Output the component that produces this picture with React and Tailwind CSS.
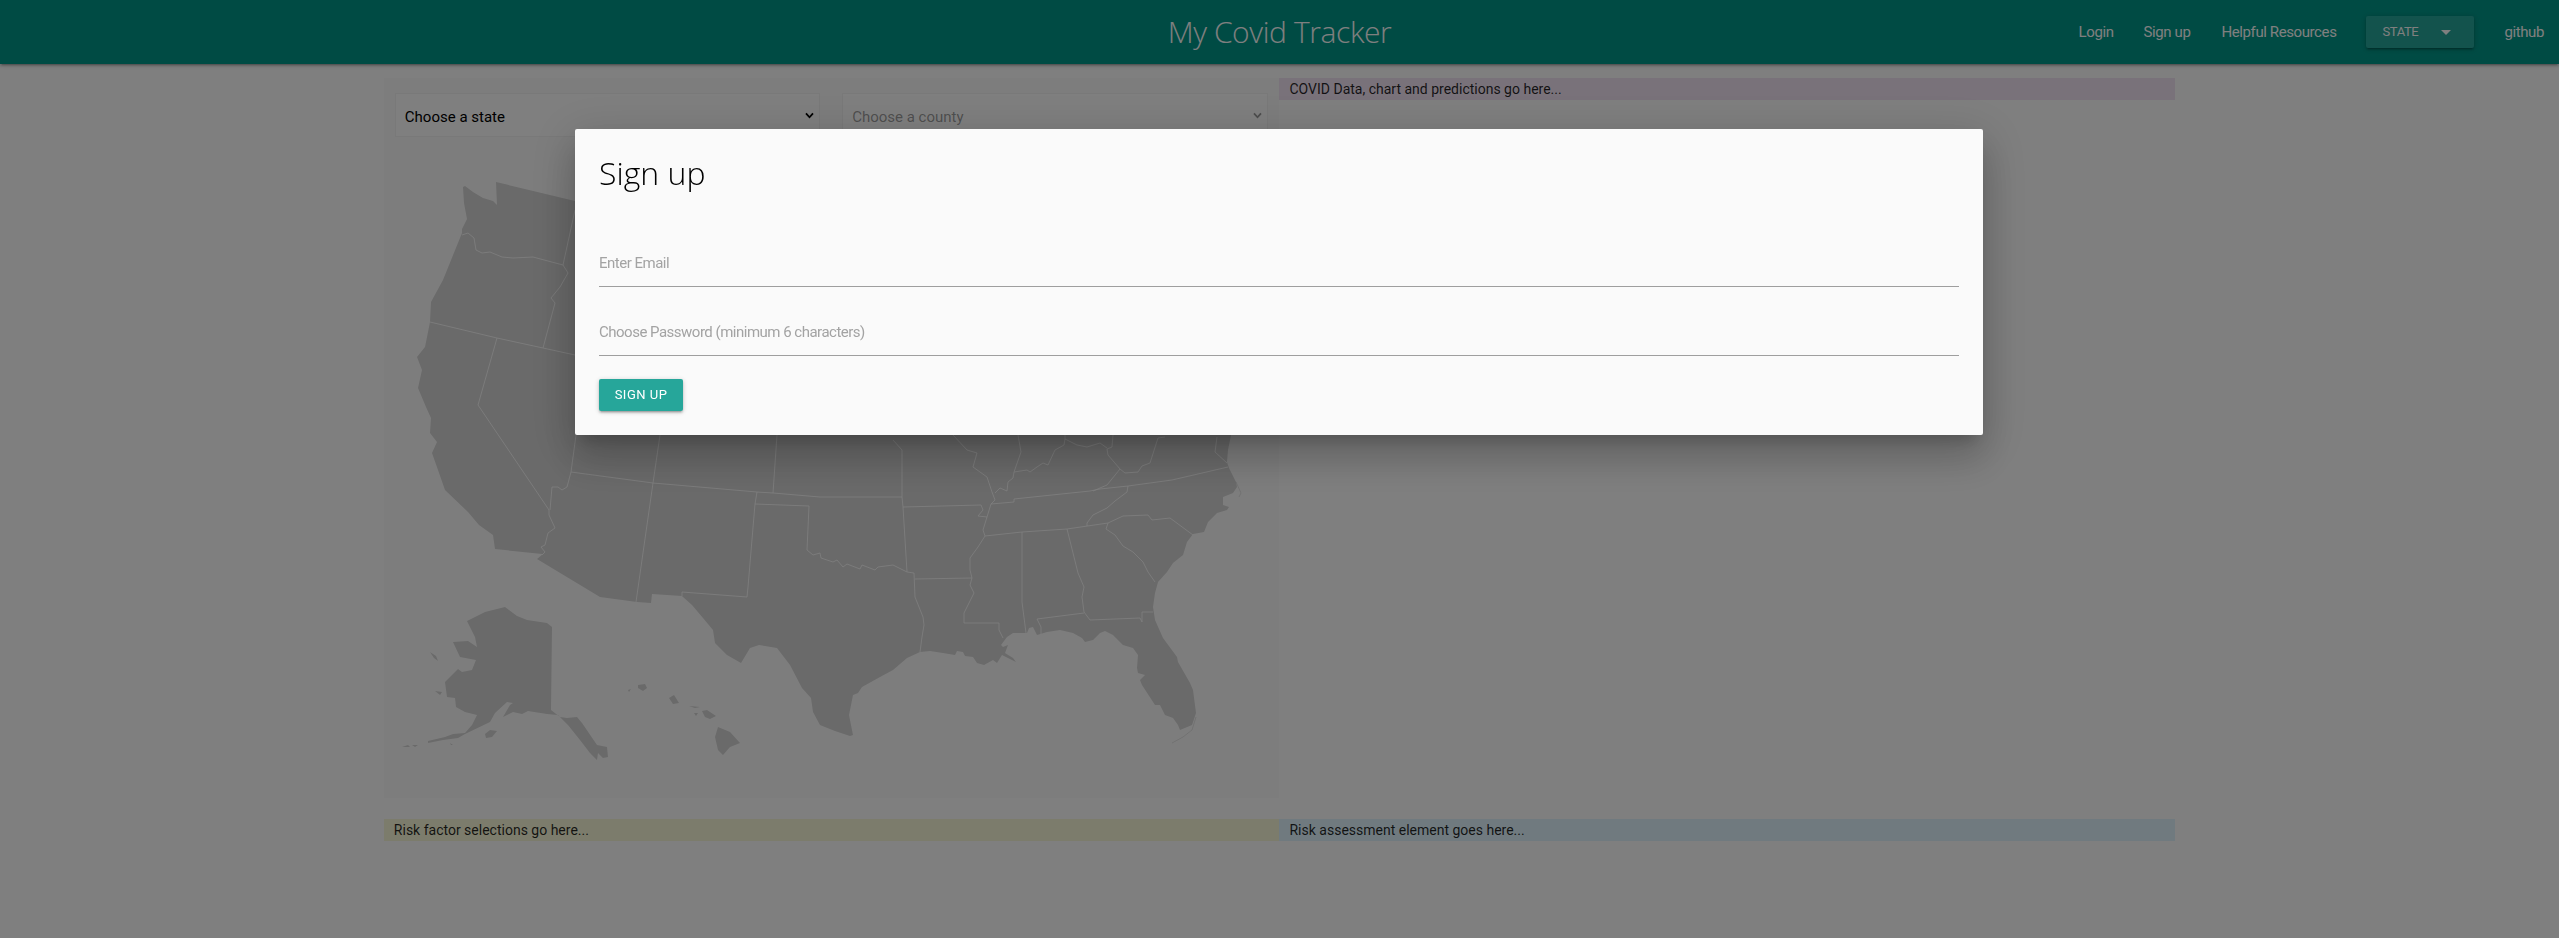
import React from "react";

// map paths use page coordinates, the svg viewBox starts at the panel's inner corner
const MAINLAND =
  "M463 187 465 186 473 192 483 198 493 201 497 205 496 182 575 201 800 201 1240 201 1231 435 1228 450 1227 462 1229 468 1236 482 1237 487 1233 493 1223 497 1223 505 1229 507 1227 510 1217 513 1208 522 1204 532 1193 534 1187 542 1183 555 1173 563 1167 572 1158 582 1155 593 1153 607 1155 620 1163 638 1177 657 1178 662 1190 683 1193 690 1196 713 1192 725 1180 730 1178 725 1173 718 1165 715 1160 705 1155 705 1142 685 1140 680 1145 675 1138 673 1137 668 1138 655 1133 648 1123 645 1113 635 1105 631 1100 633 1093 640 1085 642 1082 638 1073 633 1060 630 1047 632 1037 635 1033 627 1029 628 1027 633 1013 633 1007 637 1001 645 1003 647 1008 645 1005 653 1013 658 1016 662 1002 655 997 663 993 660 984 665 977 663 973 657 965 656 963 652 957 651 955 655 943 653 930 651 920 652 907 658 893 670 880 677 862 687 858 693 853 695 849 715 853 735 850 736 835 731 820 725 813 712 811 698 802 688 790 665 777 648 759 645 750 648 741 663 727 655 715 643 713 630 703 618 692 605 683 597 682 596 652 594 651 603 637 602 600 597 537 559 543 554 542 554 495 549 493 535 479 525 468 512 445 490 438 470 432 453 437 442 430 433 431 418 426 407 418 388 422 370 417 357 425 347 430 322 431 302 443 280 462 233 462 229 467 219 464 203Z";

const ALASKA =
  "M467 621 485 612 505 607 517 616 527 620 547 623 552 627 551 710 560 717 567 718 577 717 582 723 597 745 607 747 608 757 603 758 598 753 597 760 590 753 580 740 568 725 558 715 547 714 528 711 522 714 513 712 503 717 510 705 513 703 507 702 495 713 490 722 465 734 458 738 443 740 428 743 428 741 445 737 453 734 465 733 472 725 477 715 465 712 456 707 455 698 447 697 445 682 455 672 458 669 462 672 472 670 476 660 460 657 453 642 468 641 477 647 475 637Z";

const ISLANDS = [
  "M485 734 490 730 497 731 492 737 486 738Z",
  "M430 652 436 656 438 661 434 658Z",
  "M435 691 442 692 440 695Z",
  "M402 747 408 745 410 747Z",
  "M412 745 418 745 415 747Z",
  "M450 743 453 745 451 745Z",
  "M638 685 645 684 647 688 643 691 638 688Z",
  "M628 690 631 689 629 692Z",
  "M669 698 674 695 679 703 673 704Z",
  "M689 706 700 707 695 708Z",
  "M694 713 698 713 696 716Z",
  "M702 711 707 710 716 716 710 719 705 717Z",
  "M718 727 730 732 740 743 730 747 723 755 718 750 715 737Z",
];

const BORDERS = [
  "462,235 468,233 474,238 476,250 482,253 490,252 502,257 513,258 533,257 563,265",
  "575,210 563,265 568,273 560,287 551,298 555,303 543,348",
  "430,322 497,338 543,348 575,355",
  "497,338 478,405 549,510 549,515 555,528 548,533 545,545 541,547 545,552 542,555",
  "550,510 552,487 558,487 562,490 567,487 571,472 576,435",
  "571,472 653,483 757,492 773,493 820,497 902,497",
  "660,435 653,483 636,602",
  "757,492 755,504 748,587 747,597 682,592 682,596",
  "755,504 809,506 807,550 813,555 820,553 821,558 833,562 837,560 843,567 847,564 860,569 862,565 875,570 878,567 893,565 907,572 914,573 915,597 923,617 924,625 922,637 920,652",
  "915,579 972,578",
  "777,435 773,493",
  "893,440 902,450 902,497 903,507 907,572",
  "903,507 981,505 983,510 978,516 987,517",
  "953,435 967,450 977,453 973,467 987,477 992,492 995,500 991,504 987,517 983,530 985,536 978,547 970,558 970,570 972,578 970,585 974,593 964,613 964,623 999,623 999,630 1003,638",
  "991,504 1014,502 1014,499 1090,491 1100,489 1128,486 1172,480 1228,467",
  "995,493 1000,488 1007,491 1008,482 1013,478 1014,472 1027,470 1030,472 1037,467 1043,463 1048,465 1055,450 1064,445 1065,439 1077,445 1087,447 1100,443 1107,448",
  "1018,435 1021,452 1014,472",
  "1065,435 1065,439",
  "1113,435 1112,447 1107,449 1108,455 1120,469 1125,473 1138,472 1142,466 1150,463 1158,438 1165,437",
  "1120,469 1107,485 1093,491",
  "1217,437 1215,452 1227,463",
  "1128,486 1127,492 1115,501 1107,508 1093,515 1087,523 1087,526",
  "985,536 1022,532 1067,529 1108,523",
  "1108,523 1123,516 1148,515 1152,520 1170,518 1193,535",
  "1108,523 1106,529 1115,535 1123,546 1133,552 1143,562 1148,572 1155,582",
  "1022,532 1022,602 1026,633",
  "1067,529 1078,573 1084,587 1082,597 1084,612 1090,620 1140,618 1142,622 1142,612 1153,612",
  "1084,613 1037,619 1041,627 1041,634",
];

// thin sand bars: outer banks and the florida keys
const SHOALS = ["1236,482 1241,493 1239,497", "1196,717 1192,730 1183,737 1172,743"];

function UsMap() {
  return (
    <svg viewBox="395 145 873 645" className="mt-2 block h-[645px] w-[873px]">
      <path d={MAINLAND} fill="#d4d4d4" />
      <path d={ALASKA} fill="#d4d4d4" />
      {ISLANDS.map((d) => (
        <path key={d} d={d} fill="#d4d4d4" />
      ))}
      {SHOALS.map((points) => (
        <polyline key={points} points={points} fill="none" stroke="#d4d4d4" strokeWidth="0.6" />
      ))}
      {BORDERS.map((points) => (
        <polyline key={points} points={points} fill="none" stroke="#ffffff" strokeWidth="0.8" strokeLinejoin="round" />
      ))}
    </svg>
  );
}

function Chevron({ className }) {
  return (
    <svg viewBox="0 0 10 8" className={className} fill="none" stroke="currentColor" strokeWidth="2">
      <path d="M1 1.5 5 6 9 1.5" />
    </svg>
  );
}

function Select({ label, disabled }) {
  return (
    <div
      className={
        disabled
          ? "flex h-11 flex-1 items-center justify-between border border-[#f2f2f2] bg-white/90 pl-[9px] pr-[5px] text-[15px] text-black/40"
          : "flex h-11 flex-1 items-center justify-between border border-[#f2f2f2] bg-white/90 pl-[9px] pr-[5px] text-[15px] text-black"
      }
    >
      <span className="pt-1">{label}</span>
      <Chevron className="h-[7px] w-[9px]" />
    </div>
  );
}

function Bar({ className, children }) {
  return <div className={"h-[22px] pl-[10px] text-sm leading-[22px] text-black/85 " + className}>{children}</div>;
}

function Navbar() {
  return (
    <nav className="grid h-16 grid-cols-[1fr_auto_1fr] items-center bg-[#009688] text-white shadow-[0_2px_2px_0_rgba(0,0,0,0.14),0_3px_1px_-2px_rgba(0,0,0,0.12),0_1px_5px_0_rgba(0,0,0,0.2)]">
      <div />
      <div className="font-['Open_Sans',sans-serif] text-[30px] font-light leading-none tracking-[-0.4px]">My Covid Tracker</div>
      <div className="flex items-center justify-end pr-[15px] text-[15px] tracking-[-0.4px]">
        <a className="mr-[30px]">Login</a>
        <a className="mr-[31px]">Sign up</a>
        <a className="mr-[30px]">Helpful Resources</a>
        <button className="mr-[30px] flex h-8 w-[108px] items-center rounded-[2px] bg-[#26a69a] pl-4 text-[13px] shadow-[0_2px_2px_0_rgba(0,0,0,0.14),0_3px_1px_-2px_rgba(0,0,0,0.12),0_1px_5px_0_rgba(0,0,0,0.2)]">
          STATE
          <span className="ml-[23px] h-0 w-0 border-x-[5px] border-t-[5px] border-x-transparent border-t-white" />
        </button>
        <a>github</a>
      </div>
    </nav>
  );
}

function SignUpModal() {
  return (
    <div className="fixed inset-0 bg-black/50">
      <div className="absolute left-[575px] top-[129px] w-[1408px] rounded-[2px] bg-[#fafafa] p-6 shadow-[0_24px_38px_3px_rgba(0,0,0,0.14),0_9px_46px_8px_rgba(0,0,0,0.12),0_11px_15px_-7px_rgba(0,0,0,0.2)]">
        <h4 className="mb-[46px] font-['Open_Sans',sans-serif] text-[32px] font-light leading-10 text-black">Sign up</h4>
        <input
          placeholder="Enter Email"
          className="block h-12 w-full border-b border-[#9e9e9e] bg-transparent text-[15px] tracking-[-0.5px] outline-none placeholder:text-[#a3a3a3]"
        />
        <input
          placeholder="Choose Password (minimum 6 characters)"
          className="mt-[21px] block h-12 w-full border-b border-[#9e9e9e] bg-transparent text-[15px] tracking-[-0.5px] outline-none placeholder:text-[#a3a3a3]"
        />
        <button className="mt-[23px] block h-8 w-[84px] rounded-[2px] bg-[#26a69a] text-[13px] uppercase tracking-[0.5px] text-white shadow-[0_2px_2px_0_rgba(0,0,0,0.14),0_3px_1px_-2px_rgba(0,0,0,0.12),0_1px_5px_0_rgba(0,0,0,0.2)]">
          Sign up
        </button>
      </div>
    </div>
  );
}

export default function App() {
  return (
    <div className="relative h-screen overflow-hidden bg-white font-[Roboto,sans-serif]">
      <Navbar />
      <main className="mx-auto mt-[14px] w-[70%]">
        <div className="grid grid-cols-2">
          <div className="h-[720px] bg-[#fbfbfb] pl-[11px] pr-3 pt-[15px]">
            <div className="flex gap-[22px]">
              <Select label="Choose a state" />
              <Select label="Choose a county" disabled />
            </div>
            <UsMap />
          </div>
          <Bar className="bg-[#f3e5f5]">COVID Data, chart and predictions go here...</Bar>
        </div>
        <div className="mt-[21px] grid grid-cols-2">
          <Bar className="bg-[#f9f9d9]">Risk factor selections go here...</Bar>
          <Bar className="bg-[#e1f5fe]">Risk assessment element goes here...</Bar>
        </div>
      </main>
      <SignUpModal />
    </div>
  );
}
